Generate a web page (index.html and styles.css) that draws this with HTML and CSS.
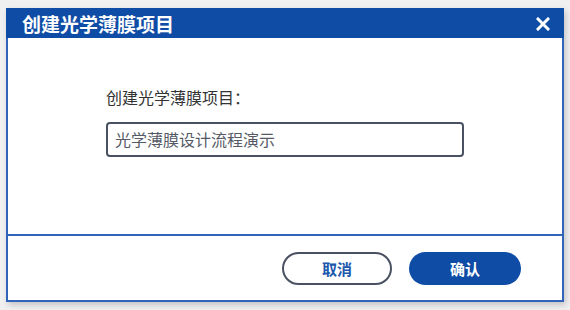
FILE: index.html
```html
<!DOCTYPE html>
<html lang="zh-CN">

<head>
    <meta charset="utf-8">
    <title>创建光学薄膜项目</title>
    <link rel="stylesheet" href="styles.css">
</head>

<body>
    <div class="dialog">
        <div class="dialog-title">
            <span>创建光学薄膜项目</span>
            <svg class="close-icon" width="14" height="14" viewBox="0 0 14 14">
                <path d="M2 2 L12 12 M12 2 L2 12" stroke="#fff" stroke-width="3" stroke-linecap="square" />
            </svg>
        </div>

        <div class="dialog-body">
            <label class="field-label">创建光学薄膜项目：</label>
            <div class="text-input">光学薄膜设计流程演示</div>
        </div>

        <div class="dialog-footer">
            <button class="btn btn-cancel">取消</button>
            <button class="btn btn-ok">确认</button>
        </div>
    </div>
</body>

</html>
```

FILE: styles.css
```css
body {
    margin: 0;
    width: 570px;
    height: 310px;
    overflow: hidden;
    background-color: #f0f0f0;
    font-family: 'Noto Sans CJK SC', 'Noto Sans', sans-serif;
}

.dialog {
    margin: 8px 6px 0 6px;
    width: 558px;
    height: 294px;
    box-sizing: border-box;
    background: #fff;
    border: 2px solid #2f64b9;
    border-top: none;
    display: flex;
    flex-direction: column;
    box-shadow: 2px 3px 6px rgba(0, 0, 0, 0.18);
}

.dialog-title {
    height: 30px;
    margin: 0 -2px;
    background-color: #0f4ca5;
    color: #fff;
    display: flex;
    align-items: center;
    justify-content: space-between;
    padding: 0 14px 0 16px;
    font-size: 19px;
    font-weight: bold;
}

.close-icon {
    display: block;
    margin-top: 1px;
}

.dialog-body {
    flex: 1;
    padding: 49px 0 0 98px;
    border-bottom: 2px solid #2f64b9;
}

.field-label {
    display: block;
    font-size: 16px;
    color: #333;
    line-height: 20px;
}

.text-input {
    margin-top: 15px;
    width: 358px;
    height: 35px;
    box-sizing: border-box;
    border: 2px solid #4a5162;
    border-radius: 4px;
    padding: 0 7px;
    font-size: 16px;
    line-height: 31px;
    color: #555a66;
}

.dialog-footer {
    height: 64px;
    display: flex;
    align-items: center;
    justify-content: flex-end;
    gap: 17px;
    padding-right: 41px;
}

.btn {
    width: 112px;
    height: 33px;
    border-radius: 17px;
    font-family: inherit;
    font-size: 15px;
    font-weight: bold;
    cursor: pointer;
}

.btn-cancel {
    width: 110px;
    background: #fff;
    border: 2px solid #4a5162;
    color: #2058ad;
}

.btn-ok {
    background: #0f4ca5;
    border: none;
    color: #fff;
}
```
